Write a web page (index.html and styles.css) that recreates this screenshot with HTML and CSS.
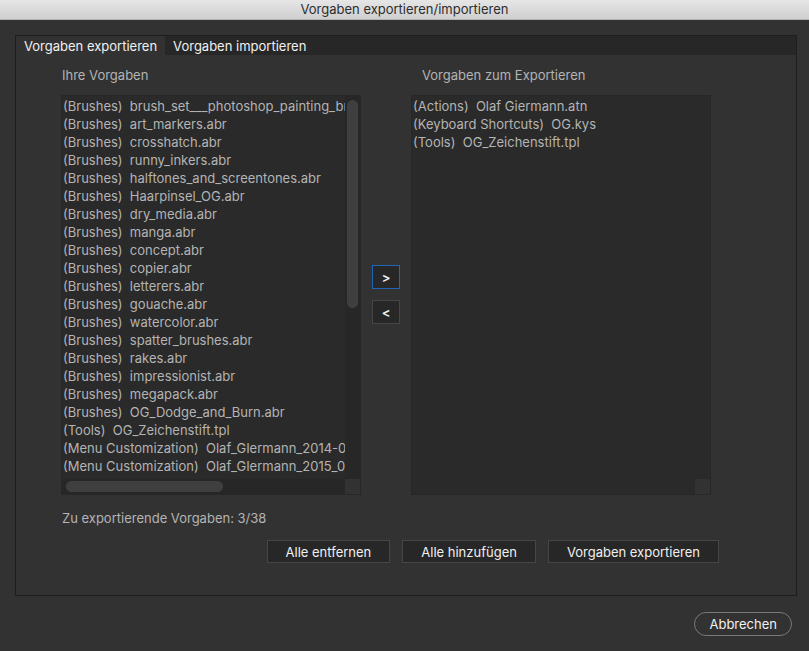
FILE: index.html
```
<!DOCTYPE html>
<html lang="de">
<head>
    <meta charset="UTF-8">
    <meta name="viewport" content="width=device-width, initial-scale=1.0">
    <title>Vorgaben exportieren/importieren</title>
    <link rel="stylesheet" href="styles.css">
</head>
<body>
    <header class="titlebar">
        <h1>Vorgaben exportieren/importieren</h1>
    </header>

    <main class="dialog">
        <section class="panel">
            <div class="tabs" role="tablist">
                <button type="button" class="tab active" id="tabExport" role="tab" aria-selected="true" aria-controls="exportPanel">Vorgaben exportieren</button>
                <button type="button" class="tab" role="tab" aria-selected="false">Vorgaben importieren</button>
            </div>

            <div class="panel-body" id="exportPanel" role="tabpanel" aria-labelledby="tabExport">
                <div class="transfer">
                    <!-- Available presets -->
                    <div class="column">
                        <h2 id="sourceLabel">Ihre Vorgaben</h2>
                        <div class="listbox">
                            <ul class="items" role="listbox" aria-labelledby="sourceLabel" tabindex="0">
                                <li role="option">(Brushes)  brush_set___photoshop_painting_br</li>
                                <li role="option">(Brushes)  art_markers.abr</li>
                                <li role="option">(Brushes)  crosshatch.abr</li>
                                <li role="option">(Brushes)  runny_inkers.abr</li>
                                <li role="option">(Brushes)  halftones_and_screentones.abr</li>
                                <li role="option">(Brushes)  Haarpinsel_OG.abr</li>
                                <li role="option">(Brushes)  dry_media.abr</li>
                                <li role="option">(Brushes)  manga.abr</li>
                                <li role="option">(Brushes)  concept.abr</li>
                                <li role="option">(Brushes)  copier.abr</li>
                                <li role="option">(Brushes)  letterers.abr</li>
                                <li role="option">(Brushes)  gouache.abr</li>
                                <li role="option">(Brushes)  watercolor.abr</li>
                                <li role="option">(Brushes)  spatter_brushes.abr</li>
                                <li role="option">(Brushes)  rakes.abr</li>
                                <li role="option">(Brushes)  impressionist.abr</li>
                                <li role="option">(Brushes)  megapack.abr</li>
                                <li role="option">(Brushes)  OG_Dodge_and_Burn.abr</li>
                                <li role="option">(Tools)  OG_Zeichenstift.tpl</li>
                                <li role="option">(Menu Customization)  Olaf_GIermann_2014-07</li>
                                <li role="option">(Menu Customization)  Olaf_GIermann_2015_02</li>
                            </ul>
                            <div class="track vertical"><div class="thumb"></div></div>
                            <div class="track horizontal"><div class="thumb"></div></div>
                            <div class="corner"></div>
                        </div>
                    </div>

                    <div class="move-buttons">
                        <button type="button" class="move focused" aria-label="Hinzufügen">&gt;</button>
                        <button type="button" class="move" aria-label="Entfernen">&lt;</button>
                    </div>

                    <!-- Presets chosen for export -->
                    <div class="column">
                        <h2 class="indented" id="targetLabel">Vorgaben zum Exportieren</h2>
                        <div class="listbox">
                            <ul class="items" role="listbox" aria-labelledby="targetLabel" tabindex="0">
                                <li role="option">(Actions)  Olaf Giermann.atn</li>
                                <li role="option">(Keyboard Shortcuts)  OG.kys</li>
                                <li role="option">(Tools)  OG_Zeichenstift.tpl</li>
                            </ul>
                            <div class="corner"></div>
                        </div>
                    </div>
                </div>

                <p class="status">Zu exportierende Vorgaben: 3/38</p>

                <div class="actions">
                    <button type="button" class="btn">Alle entfernen</button>
                    <button type="button" class="btn">Alle hinzufügen</button>
                    <button type="button" class="btn">Vorgaben exportieren</button>
                </div>
            </div>
        </section>

        <footer class="footer">
            <button type="button" class="btn-round">Abbrechen</button>
        </footer>
    </main>
</body>
</html>
```
FILE: styles.css
```
* {
    margin: 0;
    padding: 0;
    box-sizing: border-box;
}

body {
    min-height: 100vh;
    font-family: Inter, "Liberation Sans", sans-serif;
    font-size: 13px;
    line-height: 18px;
    background-color: #323232;
    color: #b4b4b4;
}

button {
    font: inherit;
    color: #f0f0f0;
}

.titlebar {
    height: 20px;
    background: linear-gradient(#e6e6e6, #cfcfcf);
    border-bottom: 1px solid #b4b4b4;
    text-align: center;
}

.titlebar h1 {
    font-size: 13px;
    font-weight: 400;
    color: #2d2d2d;
}

.dialog {
    padding: 15px 12px 15px 15px;
}

.panel {
    border: 1px solid #1e1e1e;
}

/* Tabs */
.tabs {
    display: flex;
    background-color: #272727;
}

.tab {
    height: 19px;
    padding: 0 8px;
    border: none;
    background: none;
    white-space: nowrap;
}

.tab.active {
    background-color: #323232;
}

.panel-body {
    padding: 11px 77px 32px 45px;
}

/* Preset lists */
.transfer {
    display: flex;
    padding-right: 8px;
}

.column {
    flex: 1;
    min-width: 0;
}

.column h2 {
    margin-bottom: 11px;
    padding-left: 1px;
    font-size: 13px;
    font-weight: 400;
}

.column h2.indented {
    padding-left: 11px;
}

.listbox {
    display: grid;
    grid-template-columns: minmax(0, 1fr) 15px;
    grid-template-rows: 383px 15px;
    border: 1px solid #272727;
    background-color: #2a2a2a;
}

.items {
    padding: 1px 0 0 1px;
    overflow: hidden;
    list-style: none;
    outline: none;
}

.items li {
    white-space: pre;
}

.track {
    background-color: #272727;
}

.vertical {
    padding: 4px 2px 0;
}

.vertical .thumb {
    height: 208px;
}

.horizontal {
    padding: 2px 4px;
}

.horizontal .thumb {
    width: 57%;
    height: 11px;
}

.thumb {
    border-radius: 6px;
    background-color: #3f3f3f;
}

.corner {
    grid-area: 2 / 2;
    background-color: #323232;
}

.move-buttons {
    display: flex;
    flex-direction: column;
    justify-content: center;
    align-items: center;
    gap: 11px;
    width: 50px;
    padding-top: 28px;
}

.move {
    width: 28px;
    height: 24px;
    border: 1px solid #464646;
    background-color: #272727;
    font-weight: 600;
}

.move.focused {
    border-color: #2165b5;
}

.status {
    margin-top: 14px;
    padding-left: 1px;
}

/* Buttons */
.actions {
    display: flex;
    justify-content: flex-end;
    gap: 12px;
    margin-top: 13px;
}

.btn {
    height: 23px;
    padding: 0 18px;
    border: 1px solid #464646;
    background-color: #272727;
    white-space: nowrap;
}

.footer {
    display: flex;
    justify-content: flex-end;
    padding: 16px 5px 0;
}

.btn-round {
    height: 24px;
    padding: 0 14px;
    border: 1px solid #787878;
    border-radius: 12px;
    background: none;
}
```
